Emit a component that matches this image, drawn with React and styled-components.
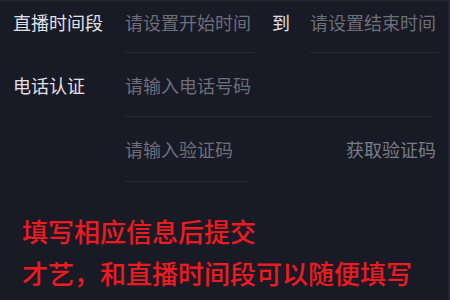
import styled, { createGlobalStyle } from "styled-components"

const GlobalStyle = createGlobalStyle`
    html, body {
        margin: 0;
        padding: 0;
        background: #181a26;
    }
    body {
        font-family: "Noto Sans CJK SC", "Noto Sans", sans-serif;
    }
`

const Page = styled.div`
    width: 450px;
    height: 300px;
    box-sizing: border-box;
    background: #181a26;
    border-top: 1px solid #242633;
    border-right: 2px solid #232532;
    padding-left: 13px;
    overflow: hidden;
`

const Row = styled.div`
    display: flex;
    align-items: flex-start;
`

const Label = styled.div`
    width: 112px;
    flex-shrink: 0;
    color: #e0e0e6;
    font-size: 18px;
    line-height: 18px;
    padding-top: ${({ top }) => top}px;
`

const Field = styled.div`
    width: ${({ width }) => width}px;
    box-sizing: border-box;
    color: #6d6e78;
    font-size: 18px;
    line-height: 18px;
    white-space: nowrap;
    padding: ${({ top }) => top}px 0 ${({ bottom }) => bottom}px;
    border-bottom: 1px solid #272937;
`

const Between = styled.div`
    color: #e0e0e6;
    font-size: 18px;
    line-height: 18px;
    padding-top: 12px;
    margin: 0 20px 0 18px;
`

const CodeButton = styled.div`
    margin-left: auto;
    margin-right: 12px;
    color: #7a7b85;
    font-size: 18px;
    line-height: 18px;
    padding-top: 23px;
`

const Note = styled.div`
    margin-top: 28px;
    padding-left: 9px;
    color: #ee1a1f;
    font-size: 26px;
    line-height: 42px;
    font-weight: 500;
    white-space: nowrap;
`

export default function App() {
    return (
        <>
            <GlobalStyle />
            <Page>
                <Row>
                    <Label top={12}>直播时间段</Label>
                    <Field width={129} top={12} bottom={21}>请设置开始时间</Field>
                    <Between>到</Between>
                    <Field width={129} top={12} bottom={21}>请设置结束时间</Field>
                </Row>
                <Row>
                    <Label top={23}>电话认证</Label>
                    <Field width={308} top={23} bottom={22}>请输入电话号码</Field>
                </Row>
                <Row>
                    <Label top={23} />
                    <Field width={123} top={23} bottom={23}>请输入验证码</Field>
                    <CodeButton>获取验证码</CodeButton>
                </Row>
                <Note>
                    <div>填写相应信息后提交</div>
                    <div>才艺，和直播时间段可以随便填写</div>
                </Note>
            </Page>
        </>
    )
}
